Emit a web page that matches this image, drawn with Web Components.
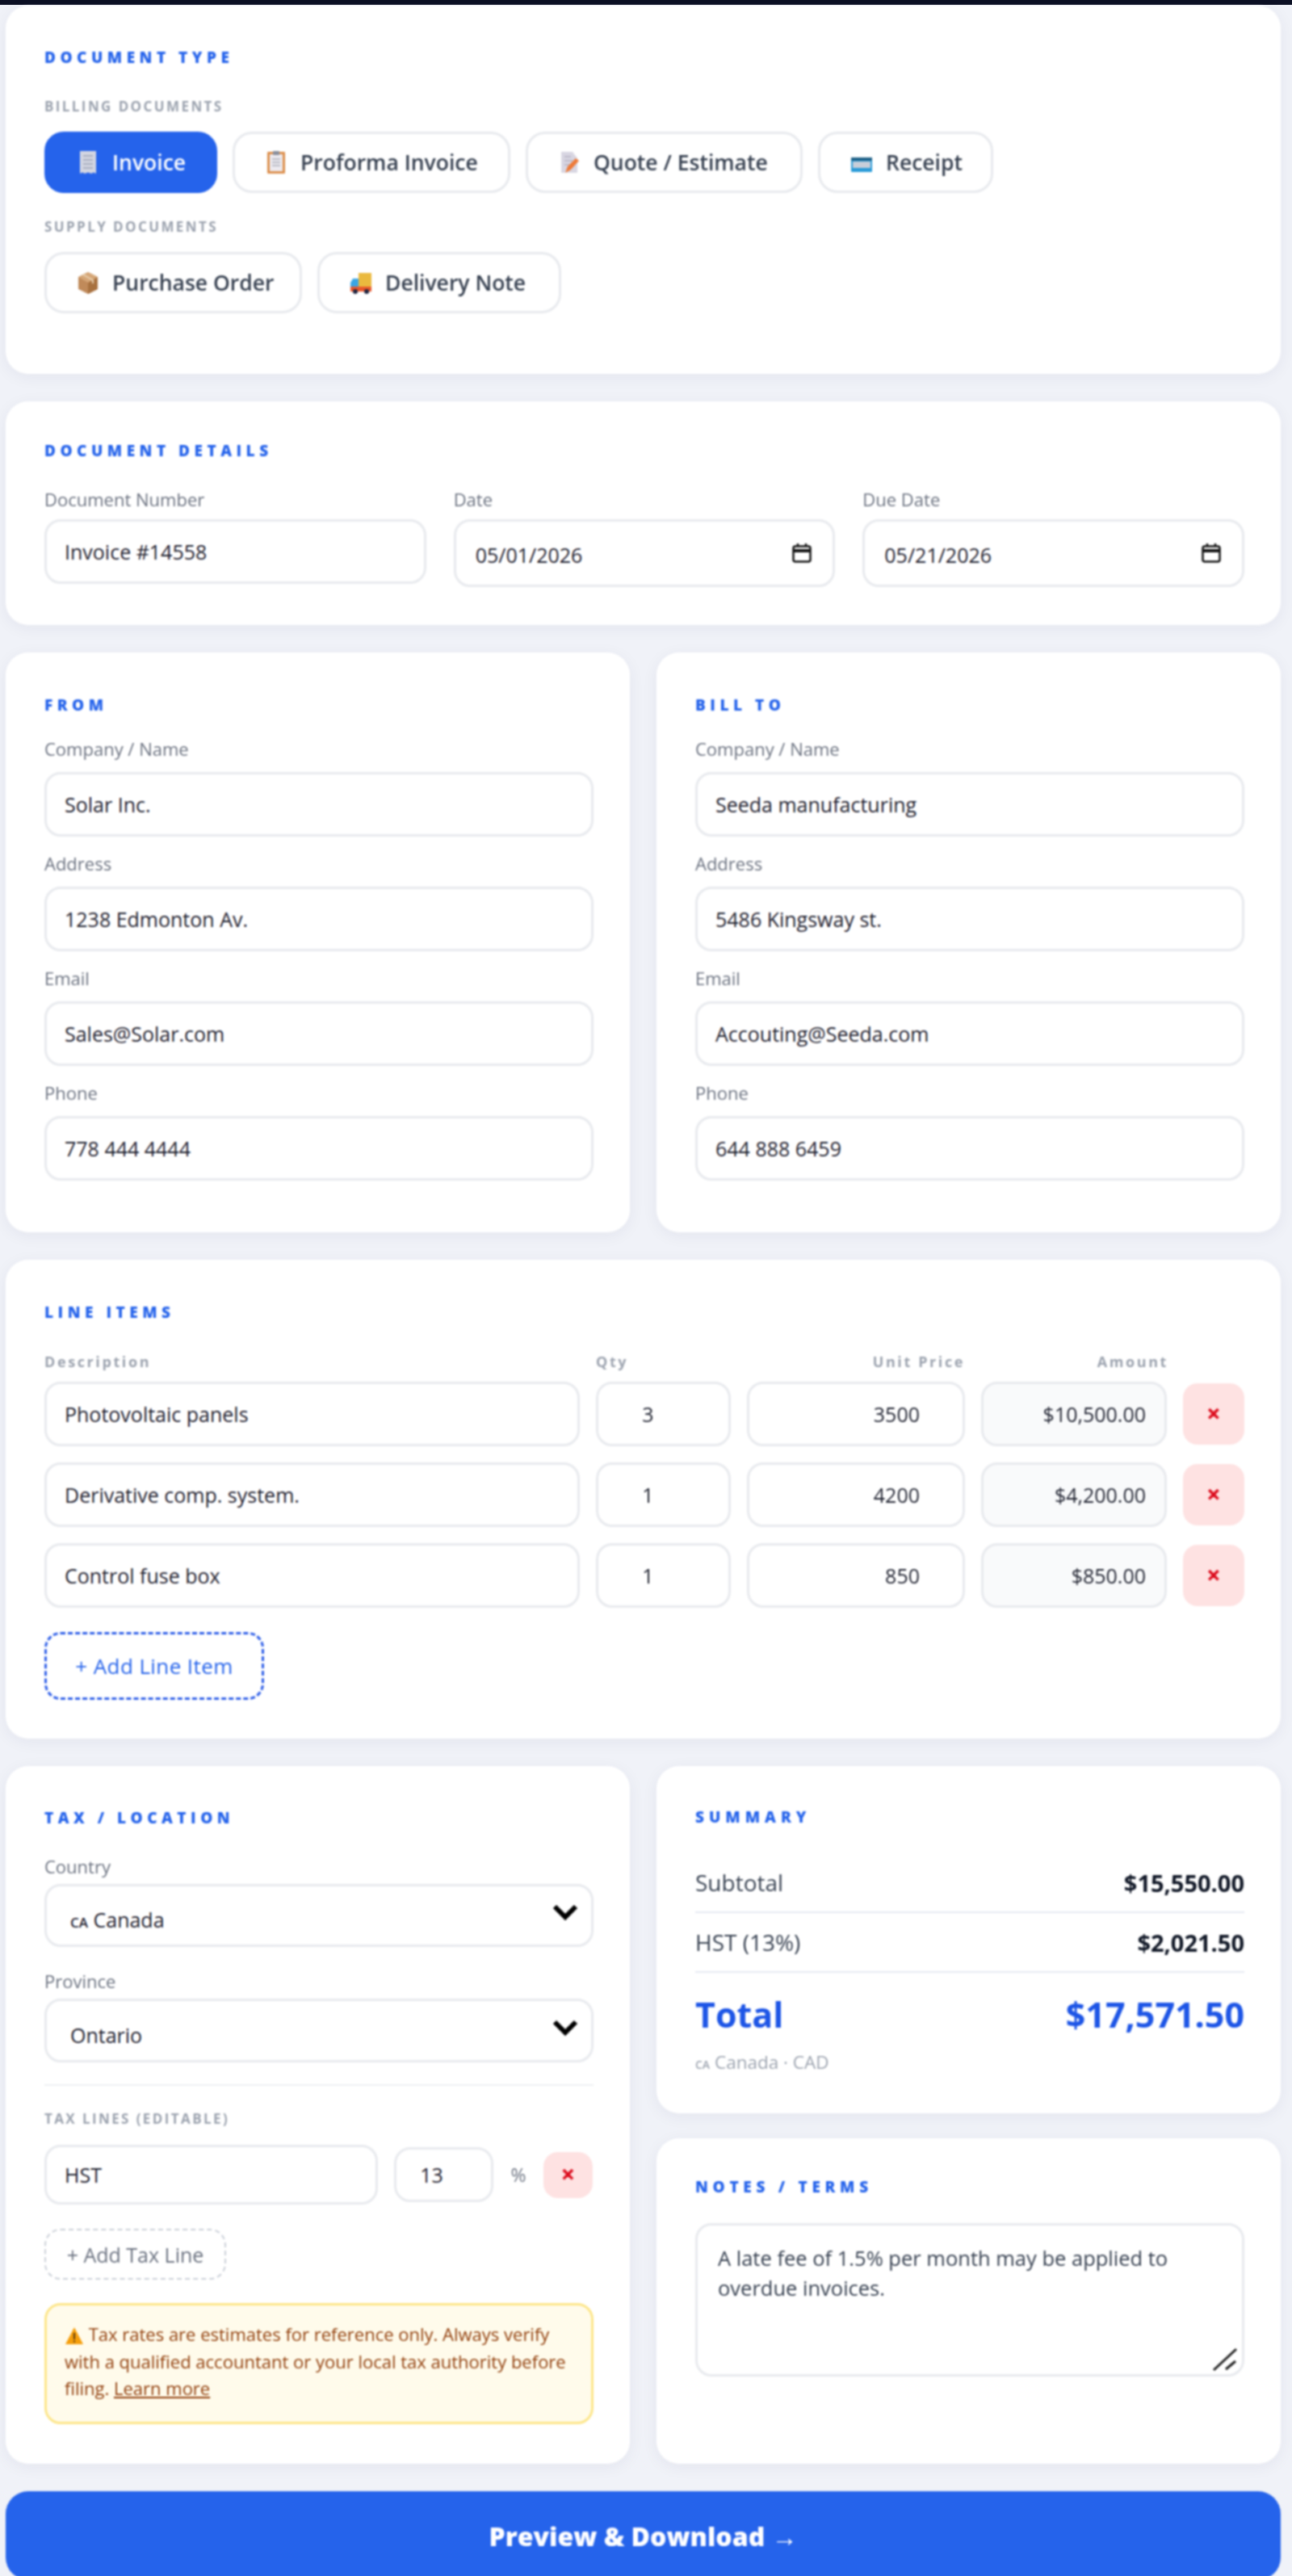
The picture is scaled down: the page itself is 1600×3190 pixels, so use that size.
<!DOCTYPE html>
<html lang="en"><head><meta charset="utf-8"><title>Invoice</title>
<style>
html,body{margin:0;padding:0;height:3190px;overflow:hidden;background:#f0f2f8;font-family:"Open Sans","Liberation Sans",sans-serif}
</style></head><body>
<x-topbar></x-topbar>
<x-app>
  <x-card style="--pt:52px;--pb:75px">
    <x-title style="--mb:37px">DOCUMENT TYPE</x-title>
    <x-group style="--mb:19px">BILLING DOCUMENTS</x-group>
    <x-row>
      <x-doc-btn active style="--w:214px"><svg slot="icon" width="28" height="30" viewBox="0 0 28 30"><path d="M4 1h20v28l-3-1.500-3 1.500-4-1.500-4 1.500-3-1.500-3 1.500z" fill="#d3d6e2"/><path d="M8 7h12M8 12h12M8 17h12M8 22h12" stroke="#a9aebf" stroke-width="2"/></svg>Invoice</x-doc-btn>
      <x-doc-btn style="--w:344px"><svg slot="icon" width="28" height="30" viewBox="0 0 28 30"><rect x="3" y="2" width="22" height="27" rx="1" fill="#dc8f4c"/><rect x="6" y="5" width="16" height="21" fill="#eceaf0"/><rect x="10" y="1" width="8" height="5" rx="1" fill="#8a8f9c"/><path d="M9 11h10M9 15h10M9 19h10" stroke="#a9adb8" stroke-width="1.500"/></svg>Proforma Invoice</x-doc-btn>
      <x-doc-btn style="--w:343px"><svg slot="icon" width="28" height="30" viewBox="0 0 28 30"><path d="M4 2h14l6 8v18H4z" fill="#d8d6e2"/><path d="M8 8h8M8 13h10M8 18h6" stroke="#b5b3c2" stroke-width="1.500"/><path d="M9 28l3-8 10-10 4 3-10 11z" fill="#ee7a38"/></svg>Quote / Estimate</x-doc-btn>
      <x-doc-btn style="--w:217px"><svg slot="icon" width="28" height="30" viewBox="0 0 28 30"><rect x="1" y="9" width="26" height="18" rx="1" fill="#2a9bd8"/><rect x="1" y="9" width="26" height="4" fill="#1c5f86"/><rect x="3" y="14" width="22" height="8" fill="#c8ced9"/></svg>Receipt</x-doc-btn>
    </x-row>
    <x-group style="--mt:30px;--mb:19px">SUPPLY DOCUMENTS</x-group>
    <x-row>
      <x-doc-btn style="--w:319px"><svg slot="icon" width="28" height="30" viewBox="0 0 28 30"><path d="M14 2l12 6v15l-12 6-12-6V8z" fill="#c08a5a"/><path d="M14 15l12-7v15l-12 6z" fill="#a8713f"/><path d="M14 2L2 8l12 7 12-7z" fill="#d5a677"/><path d="M8 5l12 7v4" stroke="#e9d0b0" stroke-width="2" fill="none"/></svg>Purchase Order</x-doc-btn>
      <x-doc-btn style="--w:302px"><svg slot="icon" width="28" height="30" viewBox="0 0 28 30"><rect x="11" y="3" width="16" height="17" fill="#eab93e"/><path d="M1 20v-5l3-5h7v10z" fill="#3aa5e4"/><rect x="1" y="20" width="26" height="6" fill="#e9562b"/><circle cx="7" cy="26" r="3" fill="#1f2540"/><circle cx="21" cy="26" r="3" fill="#1f2540"/></svg>Delivery Note</x-doc-btn>
    </x-row>
  </x-card>

  <x-card style="--pt:49px;--pb:47px">
    <x-title style="--mb:36px">DOCUMENT DETAILS</x-title>
    <x-cols style="--cols:repeat(3,minmax(0,1fr));--gap:34px;--mb:13px">
      <x-field><x-label>Document Number</x-label><x-box>Invoice #14558</x-box></x-field>
      <x-field><x-label>Date</x-label><x-box style="--h:84px;--pl:24px;--tp:4px">05/01/2026<x-cal slot="end"></x-cal></x-box></x-field>
      <x-field><x-label>Due Date</x-label><x-box style="--h:84px;--pl:24px;--tp:4px">05/21/2026<x-cal slot="end"></x-cal></x-box></x-field>
    </x-cols>
  </x-card>

  <x-cols style="--cols:repeat(2,minmax(0,1fr));--gap:33px">
    <x-card style="--pt:53px;--pb:64px">
      <x-title style="--mb:30px">FROM</x-title>
      <x-stack style="--mb:17px">
        <x-field><x-label>Company / Name</x-label><x-box>Solar Inc.</x-box></x-field>
        <x-field><x-label>Address</x-label><x-box>1238 Edmonton Av.</x-box></x-field>
        <x-field><x-label>Email</x-label><x-box>Sales@Solar.com</x-box></x-field>
        <x-field><x-label>Phone</x-label><x-box>778 444 4444</x-box></x-field>
      </x-stack>
    </x-card>
    <x-card style="--pt:53px;--pb:64px">
      <x-title style="--mb:30px">BILL TO</x-title>
      <x-stack style="--mb:17px">
        <x-field><x-label>Company / Name</x-label><x-box>Seeda manufacturing</x-box></x-field>
        <x-field><x-label>Address</x-label><x-box>5486 Kingsway st.</x-box></x-field>
        <x-field><x-label>Email</x-label><x-box>Accouting@Seeda.com</x-box></x-field>
        <x-field><x-label>Phone</x-label><x-box>644 888 6459</x-box></x-field>
      </x-stack>
    </x-card>
  </x-cols>

  <x-card style="--pt:53px;--pb:48px">
    <x-title style="--mb:37px">LINE ITEMS</x-title>
    <x-line-head><span>Description</span><span>Qty</span><span class="r">Unit Price</span><span class="r">Amount</span></x-line-head>
    <x-line-row><x-box>Photovoltaic panels</x-box><x-box style="--jc:center;--pr:60px">3</x-box><x-box style="--jc:flex-end;--pr:53px">3500</x-box><x-box style="--jc:flex-end;--pr:23px;--bg:#f9fafb">$10,500.00</x-box><x-del>✕</x-del></x-line-row>
    <x-line-row><x-box>Derivative comp. system.</x-box><x-box style="--jc:center;--pr:60px">1</x-box><x-box style="--jc:flex-end;--pr:53px">4200</x-box><x-box style="--jc:flex-end;--pr:23px;--bg:#f9fafb">$4,200.00</x-box><x-del>✕</x-del></x-line-row>
    <x-line-row><x-box>Control fuse box</x-box><x-box style="--jc:center;--pr:60px">1</x-box><x-box style="--jc:flex-end;--pr:53px">850</x-box><x-box style="--jc:flex-end;--pr:23px;--bg:#f9fafb">$850.00</x-box><x-del>✕</x-del></x-line-row>
    <x-dash-btn style="--mt:30px;--w:272px;--h:84px">+ Add Line Item</x-dash-btn>
  </x-card>

  <x-cols style="--cols:repeat(2,minmax(0,1fr));--gap:33px">
    <x-card style="--pt:52px;--pb:49px">
      <x-title style="--mb:36px">TAX / LOCATION</x-title>
      <x-label style="--mb:10px">Country</x-label>
      <x-box style="--h:78px;--pl:29px;--tp:10px"><span><x-flag>CA</x-flag> Canada</span><x-chev slot="end"></x-chev></x-box>
      <x-label style="--mt:30px;--mb:10px">Province</x-label>
      <x-box style="--h:79px;--pl:29px;--tp:10px">Ontario<x-chev slot="end"></x-chev></x-box>
      <x-rule style="--mt:27px"></x-rule>
      <x-group style="--mt:29px;--mb:20px">TAX LINES (EDITABLE)</x-group>
      <x-tax-row><x-box style="--h:74px">HST</x-box><x-box style="--h:68px;--jc:center;--pr:40px;--pl:10px">13</x-box><span>%</span><x-del style="--h:57px">✕</x-del></x-tax-row>
      <x-dash-btn style="--mt:30px;--w:225px;--h:63px;--c:#6b7280;--bc:#cbd0d8;--bw:2px;--fs:25px;--fw:400;--ls:0">+ Add Tax Line</x-dash-btn>
      <x-notice style="--mt:29px"><svg width="24" height="24" viewBox="0 0 24 24" style="vertical-align:-5px"><path d="M12 2L23 23H1z" fill="#f59e0b"/><path d="M12 9v8M12 18.500v2" stroke="#5b3a12" stroke-width="2"/></svg> Tax rates are estimates for reference only. Always verify<br>with a qualified accountant or your local tax authority before<br>filing. <u>Learn more</u></x-notice>
    </x-card>
    <x-col>
      <x-card style="--pt:51px;--pb:47px">
        <x-title style="--mb:33px;--ls:6px">SUMMARY</x-title>
        <x-sum-row><span>Subtotal</span><b>$15,550.00</b></x-sum-row>
        <x-sum-row><span>HST (13%)</span><b>$2,021.50</b></x-sum-row>
        <x-total><span>Total</span><span>$17,571.50</span></x-total>
        <x-foot><x-flag style="--fs:14px">CA</x-flag> Canada · CAD</x-foot>
      </x-card>
      <x-card style="--pt:48px;--pb:48px;--grow:1">
        <x-title style="--mb:33px;--ls:5.700px">NOTES / TERMS</x-title>
        <x-textarea>A late fee of 1.5% per month may be applied to<br>overdue invoices.</x-textarea>
      </x-card>
    </x-col>
  </x-cols>

  <x-cta>Preview &amp; Download →</x-cta>
</x-app>
<script>
const F=`"Open Sans","Liberation Sans",sans-serif`;
const def=(n,css,html='<slot></slot>')=>customElements.define(n,class extends HTMLElement{constructor(){super();this.attachShadow({mode:'open'}).innerHTML=`<style>${css}</style>${html}`}});
def('x-topbar',`:host{display:block;height:6px;background:#0c1024}`,'');
def('x-app',`:host{display:flex;flex-direction:column;gap:34px;width:1579px;margin:1px 0 0 7px;filter:blur(.8px)}`);
def('x-card',`:host{display:block;box-sizing:border-box;background:#fff;border-radius:28px;box-shadow:0 4px 20px rgba(30,40,90,.06);padding:var(--pt,52px) 45px var(--pb,48px) 48px;flex-grow:var(--grow,0)}`);
def('x-title',`:host{display:block;font:800 19px/24px ${F};letter-spacing:var(--ls,5.500px);color:#2563eb;margin-bottom:var(--mb,30px);white-space:nowrap}`);
def('x-group',`:host{display:block;font:700 17px/24px ${F};letter-spacing:2.400px;color:#9ca3af;margin:var(--mt,0) 0 var(--mb,19px)}`);
def('x-row',`:host{display:flex;gap:19px}`);
def('x-doc-btn',`:host{display:inline-flex;align-items:center;box-sizing:border-box;width:var(--w);height:76px;padding:0 0 0 37px;border:3px solid #e8eaee;border-radius:24px;background:#fff;font:600 26.500px ${F};color:#374151;white-space:nowrap}
:host([active]){background:#2563eb;border-color:#2563eb;color:#fff}
.i{display:flex;width:28px;margin-right:16px}`,`<span class="i"><slot name="icon"></slot></span><slot></slot>`);
def('x-cols',`:host{display:grid;grid-template-columns:var(--cols);gap:var(--gap);align-items:stretch}`);
def('x-col',`:host{display:flex;flex-direction:column;gap:31px}`);
def('x-stack',`:host{display:flex;flex-direction:column;gap:21px}`);
def('x-field',`:host{display:block}`);
def('x-label',`:host{display:block;font:400 22px/24px ${F};color:#6b7280;margin:var(--mt,0) 0 var(--mb,15px);white-space:nowrap}`);
def('x-box',`:host{display:flex;align-items:center;justify-content:var(--jc,flex-start);box-sizing:border-box;height:var(--h,80px);border:3px solid #e8eaee;border-radius:20px;padding:var(--tp,0) var(--pr,22px) 0 var(--pl,22px);font:400 25px ${F};color:#1f2230;background:var(--bg,#fff);white-space:nowrap;position:relative}
.e{position:absolute;right:16px;top:0;bottom:0;display:flex;align-items:center}`,`<slot></slot><span class="e"><slot name="end"></slot></span>`);
def('x-cal',`:host{display:flex;margin-right:9px}`,`<svg width="26" height="26" viewBox="0 0 26 26" fill="none" stroke="#111" stroke-width="2.500"><rect x="2.500" y="4.500" width="21" height="19" rx="2.500"/><path d="M2.500 10h21" stroke-width="4"/><path d="M8 1v4M18 1v4"/></svg>`);
def('x-chev',`:host{display:flex;margin:-8px 0 0;}`,`<svg width="32" height="22" viewBox="0 0 32 22" fill="none" stroke="#000" stroke-width="6"><path d="M3 4l13 13L29 4"/></svg>`);
def('x-flag',`:host{font-size:var(--fs,17px);font-weight:600}`);
def('x-line-head',`:host{display:grid;grid-template-columns:663px 167px 270px 232px;column-gap:20px;font:700 18px/24px ${F};letter-spacing:2.600px;color:#9ca3af;margin-bottom:13px}
::slotted(.r){text-align:right}`);
def('x-line-row',`:host{display:grid;grid-template-columns:663px 167px 270px 230px 76px;column-gap:20px;align-items:center;margin-bottom:20px}`);
def('x-del',`:host{display:flex;align-items:center;justify-content:center;height:var(--h,76px);background:#fee2e2;border-radius:18px;color:#dc0d1e;font:700 20px "DejaVu Sans",sans-serif;-webkit-text-stroke:1.500px #dc0d1e}`);
def('x-dash-btn',`:host{display:flex;align-items:center;justify-content:center;box-sizing:border-box;width:var(--w);height:var(--h);margin-top:var(--mt,0);border:var(--bw,3px) dashed var(--bc,#2f5fe8);border-radius:20px;color:var(--c,#2563eb);font:var(--fw,500) var(--fs,26px) ${F};letter-spacing:var(--ls,.4px);background:#fff;white-space:nowrap}`);
def('x-rule',`:host{display:block;height:2px;background:#eef0f3;margin-top:var(--mt,0)}`);
def('x-tax-row',`:host{display:grid;grid-template-columns:413px 123px 22px 61px;align-items:center;column-gap:20px;font:400 23px ${F};color:#6b7280}
::slotted(span){text-align:center}`);
def('x-notice',`:host{display:block;box-sizing:border-box;height:150px;margin-top:var(--mt,0);padding:19px 22px;background:#fffbeb;border:3px solid #fde68a;border-radius:20px;font:400 22px/33.500px ${F};color:#92400e;white-space:nowrap}`);
def('x-sum-row',`:host{display:flex;justify-content:space-between;align-items:center;box-sizing:border-box;height:74px;border-bottom:2px solid #e5e9f2;font:400 28px ${F};color:#374151}
::slotted(b){font-weight:700;color:#111827;font-size:29px}`);
def('x-total',`:host{display:flex;justify-content:space-between;align-items:center;height:86px;margin-top:8px;font:700 43px ${F};color:#1d55e6}`);
def('x-foot',`:host{display:block;margin-top:4px;font:400 22.500px/26px ${F};color:#9ca3af}`);
def('x-textarea',`:host{display:block;box-sizing:border-box;height:190px;border:3px solid #e8eaee;border-radius:20px;padding:22px 25px;font:400 25.500px/37px ${F};color:#374151;white-space:nowrap;position:relative}
svg{position:absolute;right:5px;bottom:3px}`,`<slot></slot><svg width="32" height="30" viewBox="0 0 32 30" stroke="#222" stroke-width="3" fill="none"><path d="M2 28L30 2M17 27l12-10"/></svg>`);
def('x-cta',`:host{display:flex;align-items:center;justify-content:center;box-sizing:border-box;height:110px;background:#2563eb;border-radius:28px;color:#fff;font:800 32px ${F}}`);
</script>
</body></html>
